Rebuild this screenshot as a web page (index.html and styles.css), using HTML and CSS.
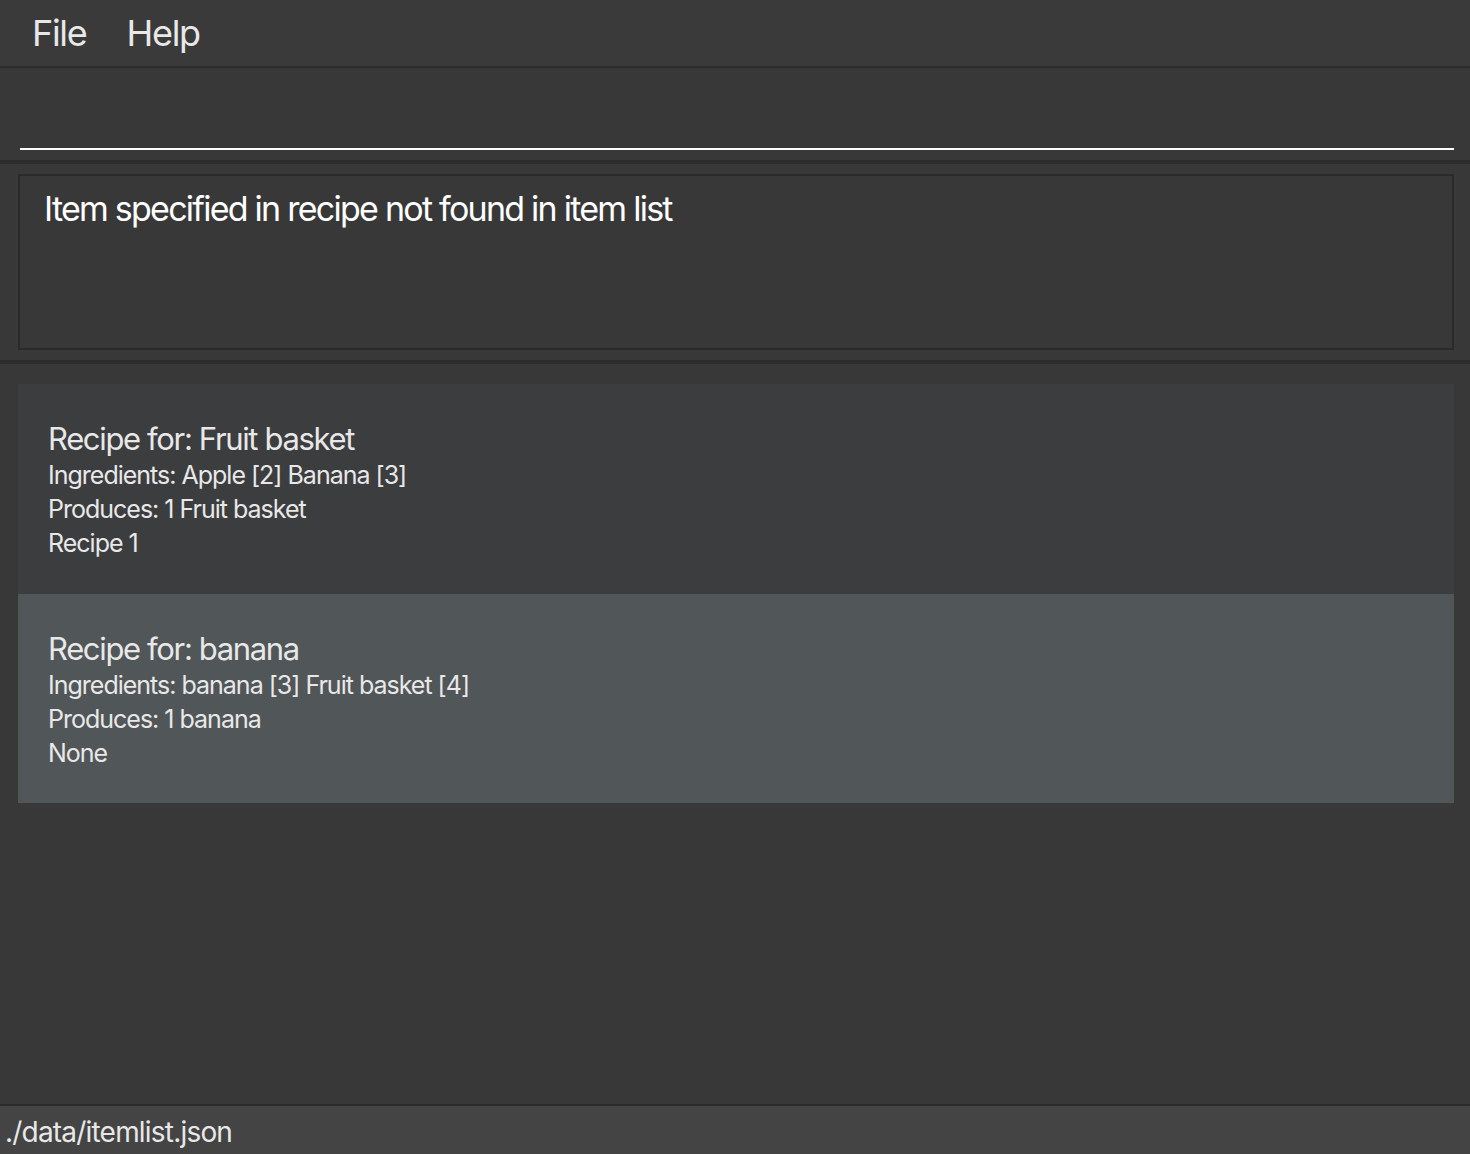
FILE: index.html
```html
<!DOCTYPE html>
<html>
<head>
<meta charset="utf-8">
<link rel="stylesheet" href="styles.css">
</head>
<body>
<div class="app">
  <div class="menubar">
    <span class="menu">File</span>
    <span class="menu">Help</span>
  </div>
  <div class="command">
    <div class="command-input"></div>
  </div>
  <div class="result">
    <div class="result-box">Item specified in recipe not found in item list</div>
  </div>
  <div class="list">
    <div class="card">
      <div class="title">Recipe for: Fruit basket</div>
      <div class="line">Ingredients: Apple [2] Banana [3]</div>
      <div class="line">Produces: 1 Fruit basket</div>
      <div class="line">Recipe 1</div>
    </div>
    <div class="card selected">
      <div class="title">Recipe for: banana</div>
      <div class="line">Ingredients: banana [3] Fruit basket [4]</div>
      <div class="line">Produces: 1 banana</div>
      <div class="line">None</div>
    </div>
  </div>
  <div class="status">./data/itemlist.json</div>
</div>
</body>
</html>
```
FILE: styles.css
```css
html, body {
  margin: 0;
  padding: 0;
  background: #383838;
  font-family: Inter, "Open Sans", sans-serif;
  color: #e6e6e6;
}
.app {
  display: flex;
  flex-direction: column;
  height: 1154px;
}
.menubar {
  height: 66px;
  background: #3a3a3a;
  border-bottom: 2px solid #2c2c2c;
  display: flex;
  align-items: center;
  padding-left: 32px;
  gap: 40px;
  box-sizing: content-box;
}
.menu {
  font-size: 36px;
  letter-spacing: -1.3px;
  color: #e8e8e8;
}
.command {
  height: 92px;
  background: #383838;
  border-bottom: 4px solid #2c2c2c;
  padding: 0 16px 0 20px;
  display: flex;
  flex-direction: column;
  justify-content: flex-start;
}
.command-input {
  margin-top: 80px;
  height: 2px;
  background: #ffffff;
}
.result {
  height: 200px;
  border-bottom: 4px solid #2c2c2c;
  padding: 10px 16px 0 18px;
  box-sizing: border-box;
}
.result-box {
  height: 176px;
  box-sizing: border-box;
  border: 2px solid #2a2a2a;
  background: #383838;
  padding: 12px 24px;
  font-size: 34px;
  letter-spacing: -1.75px;
  color: #ffffff;
}
.list {
  flex: 1;
  padding: 20px 16px 0 18px;
  display: flex;
  flex-direction: column;
}
.card {
  height: 210px;
  box-sizing: border-box;
  background: #3c3d3f;
  padding: 37px 30px 0;
}
.card.selected {
  height: 209px;
  background: #515658;
}
.title {
  font-size: 31px;
  letter-spacing: -1.35px;
  line-height: 36px;
  color: #e8e8e8;
  margin-bottom: 1px;
}
.line {
  font-size: 25px;
  letter-spacing: -1px;
  line-height: 34px;
  color: #e8e8e8;
}
.status {
  height: 48px;
  border-top: 2px solid #2c2c2c;
  background: #444444;
  font-size: 28px;
  letter-spacing: -0.8px;
  padding-left: 5px;
  line-height: 52px;
  color: #e8e8e8;
}
```
